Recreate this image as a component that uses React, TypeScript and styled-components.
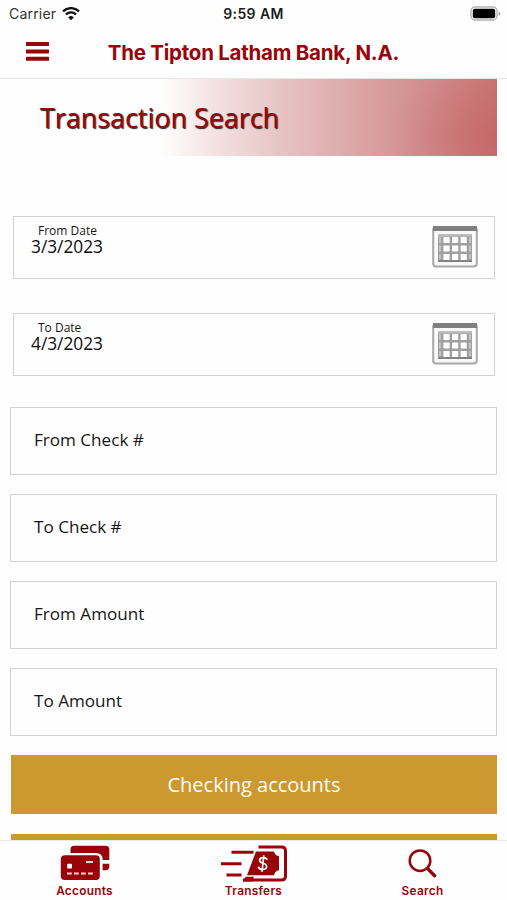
import React from "react";
import styled, { createGlobalStyle } from "styled-components";

const RED = "#98040a";

const GlobalStyle = createGlobalStyle`
  * { box-sizing: border-box; }
  body { margin: 0; background: #fff; }
  svg { display: block; flex: none; }
`;

const Screen = styled.div`
  width: 507px;
  height: 900px;
  display: flex;
  flex-direction: column;
  overflow: hidden;
  background: #fefefe;
  font-family: "Open Sans", sans-serif;
  color: #161616;
`;

const StatusBar = styled.div`
  height: 28px;
  flex: none;
  display: grid;
  grid-template-columns: 1fr auto 1fr;
  align-items: center;
  padding: 0 6px 0 9px;
  font: 400 14px/28px Inter, sans-serif;
`;

const Carrier = styled.div`
  display: flex;
  align-items: center;
  gap: 6px;
  color: #333;
  letter-spacing: 0.2px;
`;

const Clock = styled.div`
  font-weight: 600;
  font-size: 14px;
  letter-spacing: 0.4px;
  margin-left: -3px;
  color: #1c1c1c;
`;

const Battery = styled.div`
  justify-self: end;
`;

const Header = styled.header`
  height: 51px;
  flex: none;
  display: grid;
  grid-template-columns: 84px 1fr 84px;
  border-bottom: 1px solid #e6e6e6;
`;

const MenuButton = styled.button`
  border: 0;
  background: none;
  padding: 14px 0 0 26px;
  display: flex;
  align-items: flex-start;
`;

const BankName = styled.h1`
  margin: 0;
  text-align: center;
  white-space: nowrap;
  font: 650 20.5px/49px Inter, sans-serif;
  letter-spacing: -0.25px;
  color: ${RED};
`;

const Content = styled.main`
  flex: 1;
  min-height: 0;
  overflow: hidden;
  padding: 0 10px;
`;

const Banner = styled.div`
  height: 77px;
  padding-left: 30px;
  background:
    radial-gradient(ellipse 110px 70px at 100% 75%, rgba(190, 75, 75, 0.35), rgba(190, 80, 80, 0)),
    linear-gradient(90deg, #fefefe 31%, #f4e2e2 42%, #e6c1c1 57%, #d79b9b 77%, #c97575 100%);
`;

const BannerTitle = styled.h2`
  margin: 0;
  font-size: 26.9px;
  line-height: 78px;
  font-weight: 500;
  color: ${RED};
  text-shadow: 1px 1px 1px #222;
`;

const DateFields = styled.div`
  display: grid;
  gap: 34px;
  padding: 60px 2px 31px 3px;
`;

const DateField = styled.div`
  height: 63px;
  border: 1px solid #d2d2d2;
  display: flex;
  justify-content: space-between;
  align-items: flex-start;
  padding: 5px 16px 0 17px;
`;

const DateLabel = styled.div`
  padding-left: 7px;
  font-size: 12px;
  line-height: 17px;
`;

const DateValue = styled.div`
  font-size: 17.3px;
  line-height: 16px;
  font-weight: 500;
  color: #0c0c0c;
`;

const CalendarButton = styled.button`
  border: 0;
  background: none;
  padding: 3px 0 0;
`;

const Fields = styled.div`
  display: grid;
  gap: 19px;
  padding-bottom: 19px;
`;

const Field = styled.div`
  height: 68px;
  border: 1px solid #d2d2d2;
  padding-left: 23px;
  font-size: 17.1px;
  line-height: 64px;
`;

const Actions = styled.div`
  display: grid;
  gap: 20px;
`;

const ActionButton = styled.button`
  height: 59px;
  border: 0;
  margin: 0 0 0 1px;
  padding: 0;
  background: #cc9931;
  color: #fffdf5;
  font: 400 20px/59px "Open Sans", sans-serif;
`;

const TabBar = styled.nav`
  height: 60px;
  flex: none;
  display: grid;
  grid-template-columns: repeat(3, 1fr);
  border-top: 1px solid #e9e9e9;
`;

const Tab = styled.a`
  display: flex;
  flex-direction: column;
  align-items: center;
  color: ${RED};
`;

const TabLabel = styled.span`
  font: 600 11.8px/16px Inter, sans-serif;
  letter-spacing: 0.3px;
`;

const WifiIcon = () => (
  <svg width="18" height="15" viewBox="0 0 18 15" fill="none" stroke="#111" strokeWidth="2.3">
    <path d="M1 4.4a11.4 11.4 0 0 1 16 0" />
    <path d="M3.9 7.5a7.3 7.3 0 0 1 10.2 0" />
    <path d="M9 13.3 6.2 10.4a4 4 0 0 1 5.6 0Z" fill="#111" stroke="none" />
  </svg>
);

const BatteryIcon = () => (
  <svg width="31" height="16" viewBox="0 0 31 16">
    <rect x="1" y="1" width="26" height="13" rx="4" fill="#fff" stroke="#b4b4b4" strokeWidth="1.4" />
    <rect x="2.8" y="2.8" width="22.4" height="9.4" rx="2" fill="#000" />
    <path d="M28.5 5.5v4.4q2-.7 2-2.2t-2-2.2Z" fill="#aaa" />
  </svg>
);

const MenuIcon = () => (
  <svg width="23" height="19" viewBox="0 0 23 19" fill={RED}>
    <rect width="23" height="4" rx=".6" />
    <rect y="7.4" width="23" height="4" rx=".6" />
    <rect y="14.8" width="23" height="4" rx=".6" />
  </svg>
);

const CalendarIcon = () => (
  <svg width="46" height="43" viewBox="0 0 46 43">
    <rect x="1.2" y="2" width="43.6" height="39.6" rx="3" fill="#fafafa" stroke="#a8a8a8" strokeWidth="2" />
    <path d="M1 1h44v5H1z" fill="#808080" />
    <rect x="6" y="9" width="34" height="28" fill="#a0a0a0" />
    <path d="M6 9h34v2.4H6z" fill="#bdbdbd" />
    <path d="M6 35.2h34v1.8H6z" fill="#808080" />
    <g fill="#fff">
      {[12, 20.6, 29].flatMap((y) =>
        [11.4, 20, 28.6].map((x) => <rect key={`${x}-${y}`} x={x} y={y} width="6.2" height="6" rx=".6" />)
      )}
    </g>
    <path d="M8 12v22M38 12v22" stroke="#c4c4c4" strokeWidth="2" strokeDasharray="6 2.6" />
  </svg>
);

const AccountsIcon = () => (
  <svg width="50" height="36" viewBox="0 0 50 36">
    <path
      d="M10.5 8V4.5Q10.5.8 14 .8h31.5Q49.3.8 49.3 4.5v10.6h-6.7v-.6Q42.6 8 36 8ZM42.6 18.8h6.7v2.7q0 3.7-3.8 3.7h-2.9Z"
      fill={RED}
    />
    <rect x=".8" y="10.2" width="39" height="24.8" rx="4" fill={RED} />
    <rect x="7.2" y="18.8" width="4.8" height="4.6" rx=".7" fill="#fff" />
    <path d="M26 17h7M7 28.4h4.8M14 28.4h4.8M21 28.4h4.8M28 28.4h4.8" stroke="#f5d7d7" strokeWidth="2" />
  </svg>
);

const TransfersIcon = () => (
  <svg width="68" height="38" viewBox="0 0 68 38">
    <g fill="none" stroke={RED} strokeWidth="3">
      <path d="M11.5 8.3h22M1 19.7h20.5M6.5 31h15" />
      <path d="M38.5 2.9h23q4 0 4 4v25q0 4-4 4H23" />
    </g>
    <path d="M36 7.5h18q1 4 5 4.7v14q-4 .7-5 5H27Z" fill={RED} />
    <path d="M25.8 32.8h8l-1 4.6H22.6Z" fill={RED} />
    <path
      d="M47.1 15.8q-.7-2.2-3.8-2.2c-4.5 0-5 4.4-.8 5.4 5.3 1.2 5.6 6.5.1 6.5-3.3 0-4-1.4-4.3-2.7M43.8 11.4l-1.8 16.5"
      stroke="#fff"
      strokeWidth="1.7"
      fill="none"
    />
  </svg>
);

const SearchIcon = () => (
  <svg width="29" height="30" viewBox="0 0 29 30" fill="none" stroke={RED}>
    <circle cx="12" cy="12.7" r="10.3" strokeWidth="2.5" />
    <path d="m19.3 20.3 2 2" strokeWidth="2.3" />
    <path d="m20.6 21.6 6 6.1" strokeWidth="3.4" strokeLinecap="round" />
  </svg>
);

const IconSlot = styled.div<{ $top: number }>`
  height: 42px;
  padding-top: ${(p) => p.$top}px;
`;

const dates = [
  { label: "From Date", value: "3/3/2023" },
  { label: "To Date", value: "4/3/2023" },
];

const fields = ["From Check #", "To Check #", "From Amount", "To Amount"];

export default function App() {
  return (
    <>
      <GlobalStyle />
      <Screen>
        <StatusBar>
          <Carrier>
            Carrier
            <WifiIcon />
          </Carrier>
          <Clock>9:59 AM</Clock>
          <Battery>
            <BatteryIcon />
          </Battery>
        </StatusBar>
        <Header>
          <MenuButton aria-label="Menu">
            <MenuIcon />
          </MenuButton>
          <BankName>The Tipton Latham Bank, N.A.</BankName>
        </Header>
        <Content>
          <Banner>
            <BannerTitle>Transaction Search</BannerTitle>
          </Banner>
          <DateFields>
            {dates.map((d) => (
              <DateField key={d.label}>
                <div>
                  <DateLabel>{d.label}</DateLabel>
                  <DateValue>{d.value}</DateValue>
                </div>
                <CalendarButton aria-label={`Choose ${d.label}`}>
                  <CalendarIcon />
                </CalendarButton>
              </DateField>
            ))}
          </DateFields>
          <Fields>
            {fields.map((f) => (
              <Field key={f}>{f}</Field>
            ))}
          </Fields>
          <Actions>
            <ActionButton>Checking accounts</ActionButton>
            <ActionButton aria-label="More accounts" />
          </Actions>
        </Content>
        <TabBar>
          <Tab>
            <IconSlot $top={4}>
              <AccountsIcon />
            </IconSlot>
            <TabLabel>Accounts</TabLabel>
          </Tab>
          <Tab>
            <IconSlot $top={3}>
              <TransfersIcon />
            </IconSlot>
            <TabLabel>Transfers</TabLabel>
          </Tab>
          <Tab>
            <IconSlot $top={7}>
              <SearchIcon />
            </IconSlot>
            <TabLabel>Search</TabLabel>
          </Tab>
        </TabBar>
      </Screen>
    </>
  );
}
